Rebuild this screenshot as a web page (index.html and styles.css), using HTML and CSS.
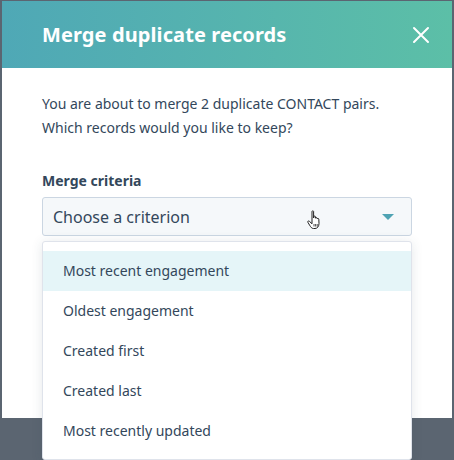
FILE: index.html
```html
<!DOCTYPE html>
<html lang="en">
<head>
    <meta charset="UTF-8">
    <meta name="viewport" content="width=device-width, initial-scale=1.0">
    <title>Merge duplicate records</title>
    <link rel="stylesheet" href="styles.css">
</head>
<body>
    <div class="modal">
        <div class="modal-header">
            <h1>Merge duplicate records</h1>
            <button class="close-button" aria-label="Close">
                <svg width="18" height="18" viewBox="0 0 18 18"><path d="M2 2 L16 16 M16 2 L2 16" stroke="#fff" stroke-width="2" stroke-linecap="round"/></svg>
            </button>
        </div>
        <div class="modal-body">
            <p class="intro">You are about to merge 2 duplicate CONTACT pairs.<br>Which records would you like to keep?</p>
            <label class="field-label">Merge criteria</label>
            <div class="select-wrap">
                <div class="select">
                    <span>Choose a criterion</span>
                    <svg class="cursor" width="16" height="20" viewBox="0 0 16 20"><path d="M5 1.5 C5 0.6 6.6 0.6 6.6 1.5 L6.6 8 L6.9 6.6 C6.9 5.8 8.4 5.8 8.4 6.6 L8.5 8.2 C8.6 7.3 10 7.3 10.1 8.2 L10.2 9 C10.3 8.2 11.7 8.2 11.8 9.1 L12 13.5 C12 16 10.5 18.5 8 18.5 L6.5 18.5 C4.6 18.5 3.8 17 2.6 15.2 L0.9 12.3 C0.4 11.3 1.6 10.4 2.4 11.3 L5 13.8 Z" fill="#fff" stroke="#222" stroke-width="1" stroke-linejoin="round"/><path d="M7 14 L7 16.5 M8.6 14 L8.6 16.5 M10.2 14 L10.2 16.5" stroke="#222" stroke-width="0.8"/></svg>
                    <span class="caret"></span>
                </div>
                <ul class="dropdown">
                    <li class="active">Most recent engagement</li>
                    <li>Oldest engagement</li>
                    <li>Created first</li>
                    <li>Created last</li>
                    <li>Most recently updated</li>
                </ul>
            </div>
        </div>
    </div>
</body>
</html>
```

FILE: styles.css
```css
html, body {
    height: 460px;
}
body {
    margin: 0;
    background-color: #5b6571;
    font-family: "Noto Sans", "Open Sans", sans-serif;
    color: #33475b;
}
.modal {
    margin: 1px 2px 0 2px;
    width: 450px;
    background: #fff;
}
.modal-header {
    height: 67px;
    background: linear-gradient(90deg, #4fa8b6 0%, #5cbfa7 100%);
    display: flex;
    align-items: center;
    justify-content: space-between;
    padding: 0 22px 0 40px;
}
.modal-header h1 {
    margin: 0;
    color: #fff;
    font-size: 20px;
    font-weight: 700;
    letter-spacing: 0.1px;
}
.close-button {
    background: none;
    border: none;
    padding: 0;
    display: flex;
    cursor: pointer;
}
.modal-body {
    height: 350px;
    padding: 0 40px;
}
.intro {
    margin: 0;
    padding-top: 24px;
    font-size: 14px;
    line-height: 24px;
}
.field-label {
    display: block;
    margin-top: 32px;
    font-size: 14px;
    font-weight: 700;
    line-height: 18px;
}
.select-wrap {
    position: relative;
    margin-top: 7px;
}
.select {
    height: 39px;
    box-sizing: border-box;
    border: 1px solid #cbd6e2;
    border-radius: 3px;
    background: #f5f8fa;
    display: flex;
    align-items: center;
    padding: 0 17px 0 10px;
    font-size: 16px;
    position: relative;
}
.select span:first-child {
    flex: 1;
}
.cursor {
    position: absolute;
    left: 264px;
    top: 12px;
}
.caret {
    width: 0;
    height: 0;
    border-left: 6px solid transparent;
    border-right: 6px solid transparent;
    border-top: 6px solid #4fa3b3;
}
.dropdown {
    position: absolute;
    top: 44px;
    left: 0;
    right: 0;
    margin: 0;
    padding: 9px 0 0 0;
    list-style: none;
    background: #fff;
    border: 1px solid #dfe3eb;
    border-radius: 3px;
    box-shadow: 0 1px 12px rgba(45, 62, 80, 0.12);
    height: 208px;
    overflow: hidden;
}
.dropdown li {
    height: 40px;
    line-height: 40px;
    padding-left: 20px;
    font-size: 14px;
}
.dropdown li.active {
    background: #e5f5f8;
}
```
